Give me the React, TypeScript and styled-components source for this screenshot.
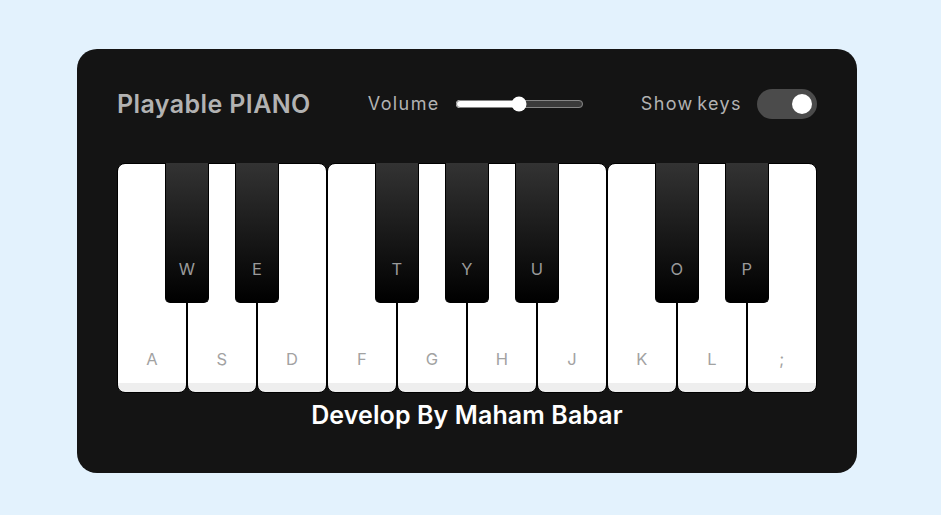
import React, { useState } from "react";
import styled, { createGlobalStyle } from "styled-components";

const GlobalStyle = createGlobalStyle`
  * { margin: 0; padding: 0; box-sizing: border-box; }
  html, body { background: #e3f2fd; }
  body { font-family: Inter, "Noto Sans", sans-serif; }
`;

const Page = styled.div`
  min-height: 515px;
  padding: 49px 0 0 77px;
`;

const Wrapper = styled.div`
  width: 780px;
  padding: 35px 40px;
  border-radius: 20px;
  background: #141414;
`;

const Header = styled.header`
  display: flex;
  align-items: center;
  justify-content: space-between;
  color: #b2b2b2;
  height: 39px;
`;

const Title = styled.h2`
  font-size: 25px;
  font-weight: 600;
  letter-spacing: 0.4px;
`;

const Column = styled.div`
  display: flex;
  align-items: center;
`;

const Label = styled.span`
  font-weight: 400;
  font-size: 18px;
  letter-spacing: 1.4px;
  word-spacing: -3px;
  margin-right: 15px;
`;

const Range = styled.input`
  accent-color: #fff;
  width: 129px;
  outline: none;
  cursor: pointer;
`;

const Toggle = styled.input`
  appearance: none;
  width: 60px;
  height: 30px;
  border-radius: 30px;
  background: #4b4b4b;
  position: relative;
  cursor: pointer;
  outline: none;
  &::before {
    content: "";
    position: absolute;
    top: 50%;
    left: 5px;
    width: 20px;
    height: 20px;
    border-radius: 50%;
    transform: translateY(-50%);
    background: #8c8c8c;
  }
  &:checked::before {
    left: 35px;
    background: #fff;
  }
`;

const Keys = styled.ul`
  display: flex;
  list-style: none;
  margin-top: 40px;
`;

const WhiteKey = styled.li`
  position: relative;
  width: 70px;
  height: 230px;
  border: 1px solid #000;
  border-radius: 8px;
  background: linear-gradient(#fff 96%, #eee 4%);
  cursor: pointer;
`;

const BlackKey = styled.li`
  position: relative;
  z-index: 2;
  width: 44px;
  height: 140px;
  margin: 0 -22px;
  border: 1px solid #000;
  border-top: none;
  border-radius: 0 0 5px 5px;
  background: linear-gradient(#333, #000);
  cursor: pointer;
`;

const KeyLabel = styled.span<{ $black?: boolean }>`
  position: absolute;
  left: 0;
  bottom: 20px;
  width: 100%;
  text-align: center;
  font-size: 16.5px;
  line-height: 25px;
  letter-spacing: 0.3px;
  color: ${(p) => (p.$black ? "#9a9a9a" : "#a2a2a2")};
  text-transform: uppercase;
  user-select: none;
`;

const Footer = styled.h3`
  color: #fff;
  text-align: center;
  font-size: 25px;
  font-weight: 600;
  letter-spacing: 0.1px;
  line-height: 45px;
`;

const layout: { k: string; black: boolean }[] = [
  { k: "a", black: false },
  { k: "w", black: true },
  { k: "s", black: false },
  { k: "e", black: true },
  { k: "d", black: false },
  { k: "f", black: false },
  { k: "t", black: true },
  { k: "g", black: false },
  { k: "y", black: true },
  { k: "h", black: false },
  { k: "u", black: true },
  { k: "j", black: false },
  { k: "k", black: false },
  { k: "o", black: true },
  { k: "l", black: false },
  { k: "p", black: true },
  { k: ";", black: false },
];

export default function App() {
  const [vol, setVol] = useState(0.5);
  const [show, setShow] = useState(true);
  return (
    <>
      <GlobalStyle />
      <Page>
        <Wrapper>
          <Header>
            <Title>Playable PIANO</Title>
            <Column>
              <Label>Volume</Label>
              <Range
                type="range"
                min={0}
                max={1}
                step={0.1}
                value={vol}
                onChange={(e) => setVol(parseFloat(e.target.value))}
              />
            </Column>
            <Column>
              <Label>Show keys</Label>
              <Toggle type="checkbox" checked={show} onChange={() => setShow(!show)} />
            </Column>
          </Header>
          <Keys>
            {layout.map(({ k, black }) =>
              black ? (
                <BlackKey key={k}>{show && <KeyLabel $black>{k}</KeyLabel>}</BlackKey>
              ) : (
                <WhiteKey key={k}>{show && <KeyLabel>{k}</KeyLabel>}</WhiteKey>
              )
            )}
          </Keys>
          <Footer>Develop By Maham Babar</Footer>
        </Wrapper>
      </Page>
    </>
  );
}
